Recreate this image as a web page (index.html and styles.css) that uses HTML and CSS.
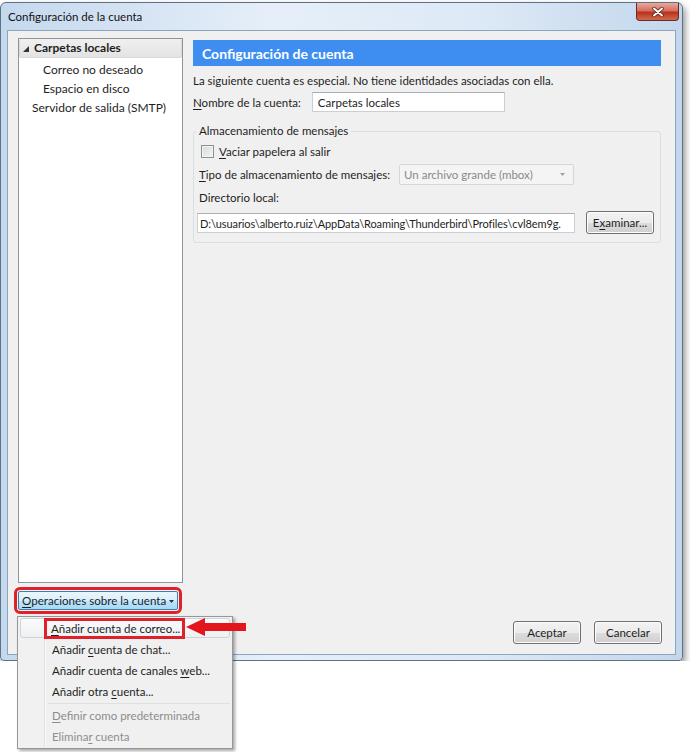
FILE: index.html
```html
<!DOCTYPE html>
<html lang="es">
<head>
<meta charset="UTF-8">
<meta name="viewport" content="width=device-width, initial-scale=1.0">
<title>Configuración de la cuenta</title>
<link rel="stylesheet" href="styles.css">
</head>
<body>

<div class="window">
  <!-- Title bar -->
  <div class="titlebar">
    <span class="title">Configuración de la cuenta</span>
    <span class="close-btn">
      <svg width="14" height="10" viewBox="0 0 14 10">
        <path d="M3 1.5 L11 8.5 M11 1.5 L3 8.5" stroke="#4a1a12" stroke-width="3.4" stroke-linecap="round"/>
        <path d="M3 1.5 L11 8.5 M11 1.5 L3 8.5" stroke="#fff" stroke-width="2" stroke-linecap="round"/>
      </svg>
    </span>
  </div>

  <div class="client">
    <!-- Left: account tree -->
    <div class="sidebar">
      <div class="tree">
        <div class="tree-row selected">
          <svg class="twisty" width="6" height="6" viewBox="0 0 6 6"><path d="M6 0 L6 6 L0 6 Z" fill="#333"/></svg>
          <b>Carpetas locales</b>
        </div>
        <div class="tree-row sub">Correo no deseado</div>
        <div class="tree-row sub">Espacio en disco</div>
        <div class="tree-row smtp">Servidor de salida (SMTP)</div>
      </div>
      <button class="ops-button"><span><u>O</u>peraciones sobre la cuenta</span><svg class="caret" width="5" height="3" viewBox="0 0 5 3"><path d="M0 0 L5 0 L2.5 3 Z" fill="#333"/></svg></button>
    </div>

    <!-- Right: settings pane -->
    <div class="main">
      <div class="pane-header">Configuración de cuenta</div>
      <p class="note">La siguiente cuenta es especial. No tiene identidades asociadas con ella.</p>
      <div class="name-row">
        <span class="label"><u>N</u>ombre de la cuenta:</span>
        <span class="textbox name-box">Carpetas locales</span>
      </div>

      <fieldset class="group">
        <legend>Almacenamiento de mensajes</legend>
        <div class="check-row">
          <span class="checkbox"></span>
          <span><u>V</u>aciar papelera al salir</span>
        </div>
        <div class="type-row">
          <span class="label"><u>T</u>ipo de almacenamiento de mensajes:</span>
          <span class="select">Un archivo grande (mbox)<svg class="select-arrow" width="5" height="3" viewBox="0 0 5 3"><path d="M0 0 L5 0 L2.5 3 Z" fill="#a0a0a0"/></svg></span>
        </div>
        <div class="dir-label">Directorio local:</div>
        <div class="dir-row">
          <span class="textbox path-box">D:\usuarios\alberto.ruiz\AppData\Roaming\Thunderbird\Profiles\cvl8em9g.</span>
          <button class="btn browse">E<u>x</u>aminar...</button>
        </div>
      </fieldset>

      <div class="dialog-buttons">
        <button class="btn">Aceptar</button>
        <button class="btn">Cancelar</button>
      </div>
    </div>
  </div>
</div>

<!-- Dropdown menu of "Operaciones sobre la cuenta" -->
<div class="menu">
  <div class="menu-item hover"><span class="marked"><u>A</u>ñadir cuenta de correo...</span></div>
  <div class="menu-item">Añadir <u>c</u>uenta de chat...</div>
  <div class="menu-item">Añadir cuenta de canales <u>w</u>eb...</div>
  <div class="menu-item">Añadir otra <u>c</u>uenta...</div>
  <div class="menu-sep"></div>
  <div class="menu-item disabled"><u>D</u>efinir como predeterminada</div>
  <div class="menu-item disabled">Elimina<u>r</u> cuenta</div>
</div>

<!-- Red pointer arrow -->
<svg class="pointer" width="60" height="18" viewBox="0 0 60 18">
  <path d="M0 9 L19 0 L19 5 L60 5 L60 13 L19 13 L19 18 Z" fill="#e3161d"/>
</svg>

</body>
</html>
```

FILE: styles.css
```css
body {
  margin: 0;
  background: #fff;
  font-family: Lato, "Liberation Sans", sans-serif;
  font-size: 11.5px;
  color: #1e1e1e;
}
u {
  text-decoration: underline;
  text-underline-offset: 2px;
}
button {
  font-family: inherit;
  font-size: 11.5px;
  color: #1e1e1e;
}

/* Window frame */
.window {
  width: 683px;
  height: 659px;
  box-sizing: border-box;
  margin-top: 2px;
  padding: 0 6px 5px 6px;
  display: flex;
  flex-direction: column;
  border: 1px solid #5f7185;
  border-radius: 6px 6px 4px 4px;
  background: linear-gradient(to right, #c4d8ee, #e6eff9 40%, #dde9f6 70%, #c3d7ec);
  box-shadow: 2px 4px 7px rgba(0, 0, 0, 0.45);
}
.titlebar {
  height: 27px;
  display: flex;
  align-items: center;
}
.title {
  padding-left: 1px;
  margin-top: -1px;
  color: #111;
}
.close-btn {
  margin-left: auto;
  margin-right: -3px;
  align-self: flex-start;
  width: 43px;
  height: 18px;
  box-sizing: border-box;
  display: flex;
  justify-content: center;
  align-items: center;
  border: 1px solid #6e2a20;
  border-top: none;
  border-radius: 0 0 4px 4px;
  background: linear-gradient(#e9a99c, #d4705e 45%, #b9321e 55%, #cf6a4e);
}

/* Client area */
.client {
  flex: 1;
  display: flex;
  gap: 10px;
  padding: 7px 12px 10px 10px;
  border: 1px solid #8da4bd;
  background: #f0f0f0;
}
.sidebar {
  width: 165px;
  flex-shrink: 0;
  display: flex;
  flex-direction: column;
}
.tree {
  flex: 1;
  border: 1px solid #8f959c;
  background: #fff;
  font-size: 12px;
}
.tree-row {
  height: 19px;
  line-height: 19px;
  white-space: nowrap;
}
.tree-row.selected {
  height: 18px;
  line-height: 18px;
  margin: 0 0 2px 0;
  padding-left: 3px;
  display: flex;
  align-items: center;
  gap: 5px;
  background: linear-gradient(#f0f0f0, #e3e3e3);
  border: 1px solid #d9d9d9;
  border-radius: 2px;
  border-top: none;
}
.twisty {
  margin-top: 1px;
}
.tree-row.sub {
  padding-left: 24px;
}
.tree-row.smtp {
  padding-left: 13px;
}
.ops-button {
  margin: 8px 0 34px 0;
  width: 160px;
  height: 19px;
  padding: 0 0 0 3px;
  display: flex;
  align-items: center;
  gap: 3px;
  white-space: nowrap;
  font-size: 11.6px;
  border: 1px solid #3c7fb1;
  border-radius: 2px;
  background: linear-gradient(#eaf6fd, #d9f0fc 50%, #bee6fd 51%, #a7d9f5);
  outline: 3px solid #e0202a;
  outline-offset: 1px;
}
.caret {
  flex-shrink: 0;
  margin-top: 1px;
}

/* Settings pane */
.main {
  flex: 1;
  min-width: 0;
  display: flex;
  flex-direction: column;
}
.pane-header {
  margin-top: 2px;
  height: 26px;
  line-height: 27px;
  padding-left: 9px;
  margin-right: 2px;
  background: #3d8ef0;
  color: #fff;
  font-weight: bold;
  font-size: 14px;
}
.note {
  margin: 7px 0 0 0;
  line-height: 16px;
}
.name-row {
  margin-top: 3px;
  display: flex;
  align-items: center;
  gap: 11px;
}
.textbox {
  height: 20px;
  line-height: 19px;
  box-sizing: border-box;
  padding: 0 5px;
  border: 1px solid #c9cfd6;
  border-top-color: #abadb3;
  background: #fff;
  white-space: nowrap;
  overflow: hidden;
}
.name-box {
  width: 193px;
}

/* Group box */
.group {
  min-width: 0;
  margin: 11px 2px 0 0;
  padding: 0 6px 8px 3px;
  border: 1px solid #d5dfe5;
  border-radius: 3px;
}
.group legend {
  padding: 0 3px;
  margin-left: -1px;
  line-height: 16px;
}
.check-row {
  margin-top: 3px;
  height: 18px;
  display: flex;
  align-items: center;
  gap: 5px;
  padding-left: 4px;
}
.checkbox {
  width: 11px;
  height: 11px;
  border: 1px solid #8e8f8f;
  background: linear-gradient(135deg, #d8d9da, #f4f4f4);
  box-shadow: inset 0 0 0 1px #f4f4f4;
}
.type-row {
  margin-top: 3px;
  height: 22px;
  display: flex;
  align-items: center;
  gap: 9px;
  padding-left: 2px;
}
.select {
  width: 175px;
  height: 21px;
  box-sizing: border-box;
  padding: 0 4px;
  display: flex;
  align-items: center;
  justify-content: space-between;
  border: 1px solid #d7d7d7;
  border-radius: 2px;
  background: #f4f4f4;
  color: #8a8a8a;
}
.select-arrow {
  margin-right: 4px;
}
.dir-label {
  margin-top: 5px;
  height: 16px;
  line-height: 16px;
  padding-left: 2px;
}
.dir-row {
  margin-top: 5px;
  display: flex;
  align-items: center;
  gap: 11px;
}
.path-box {
  flex: 1;
  min-width: 0;
  padding: 0 2px 0 2px;
  font-size: 11px;
  letter-spacing: -0.1px;
}
.btn {
  width: 68px;
  height: 23px;
  padding: 0;
  flex-shrink: 0;
  border: 1px solid #707070;
  border-radius: 3px;
  background: linear-gradient(#f2f2f2, #ebebeb 50%, #dddddd 51%, #cfcfcf);
  box-shadow: inset 0 0 0 1px #fcfcfc;
}
.dialog-buttons {
  margin-top: auto;
  margin-right: 1px;
  display: flex;
  justify-content: flex-end;
  gap: 13px;
}

/* Popup menu */
.menu {
  position: absolute;
  left: 17px;
  top: 616px;
  width: 216px;
  box-sizing: border-box;
  padding: 1px 2px 1px 2px;
  border: 1px solid #979797;
  background: linear-gradient(to right, #f1f1f1 26px, #e2e3e3 26px, #e2e3e3 27px, #fff 27px, #f0f0f0 28px);
  box-shadow: 2px 2px 3px rgba(0, 0, 0, 0.35);
}
.menu-item {
  height: 21px;
  line-height: 21px;
  box-sizing: border-box;
  padding-left: 32px;
  white-space: nowrap;
}
.menu-item.hover {
  height: 20px;
  line-height: 19px;
  margin-bottom: 1px;
  border: 1px solid #cfd3d8;
  border-radius: 3px;
  padding-left: 31px;
  background: linear-gradient(#fafbfc, #eef0f2);
}
.marked {
  outline: 3px solid #e0202a;
  outline-offset: 0;
  padding: 0 2px 0 4px;
  margin-left: -5px;
  display: inline-block;
  line-height: 15px;
}
.menu-item.disabled {
  color: #8d8d8d;
}
.menu-sep {
  height: 3px;
  margin-left: 28px;
  border-top: 1px solid #e0e0e0;
  box-sizing: border-box;
  margin-top: 1px;
  margin-bottom: -1px;
}

.pointer {
  position: absolute;
  left: 186px;
  top: 618px;
}
```
